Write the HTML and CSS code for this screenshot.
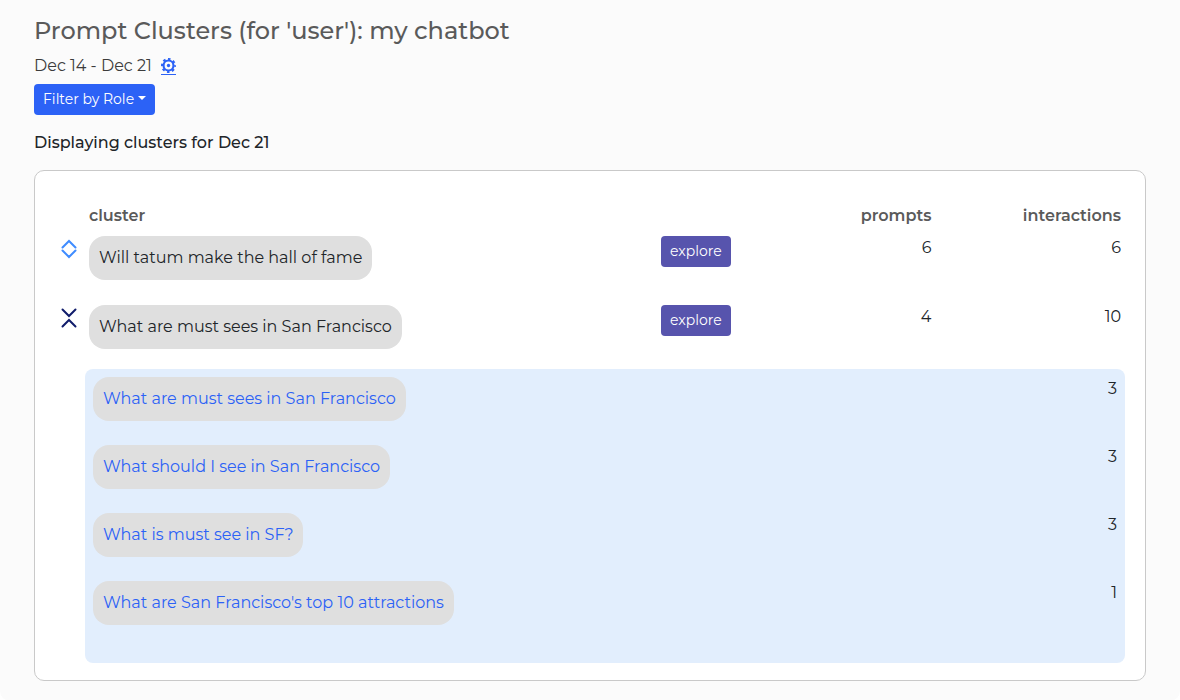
FILE: index.html
```html
<!DOCTYPE html>
<html lang="en">
<head>
<meta charset="utf-8">
<meta name="viewport" content="width=device-width, initial-scale=1">
<title>Prompt Clusters</title>
<link rel="stylesheet" href="styles.css">
</head>
<body>
<main class="page">
  <h1 class="title">Prompt Clusters (for 'user'): my chatbot</h1>
  <div class="range">
    <span>Dec 14 - Dec 21</span>
    <a class="settings" href="#settings" aria-label="Date settings">
      <svg class="gear" viewBox="0 0 16 16" aria-hidden="true">
        <circle cx="8" cy="8" r="5.3" fill="none" stroke="currentColor" stroke-width="2.3"/>
        <circle cx="8" cy="8" r="6.9" fill="none" stroke="currentColor" stroke-width="2.2" stroke-dasharray="2.7 2.719" stroke-dashoffset="1.35"/>
        <circle cx="8" cy="8" r="1.8" fill="currentColor"/>
      </svg>
    </a>
  </div>
  <button class="btn btn-primary" type="button">Filter by Role<span class="caret"></span></button>
  <h2 class="subtitle">Displaying clusters for Dec 21</h2>

  <section class="card">
    <table class="clusters">
      <colgroup>
        <col class="col-toggle"><col><col class="col-action"><col class="col-prompts"><col class="col-interactions">
      </colgroup>
      <thead>
        <tr><td></td><th scope="col">cluster</th><td></td><th class="num" scope="col">prompts</th><th class="num" scope="col">interactions</th></tr>
      </thead>
      <tbody>
        <tr class="cluster">
          <td><button class="toggle toggle-closed" type="button" aria-label="Expand cluster" aria-expanded="false"><svg class="chevrons" viewBox="0 0 16 20" aria-hidden="true"><path d="M1.500 8.500 8 2 14.500 8.500M1.500 11.500 8 18 14.500 11.500"/></svg></button></td>
          <td><div class="pill">Will tatum make the hall of fame</div></td>
          <td><button class="btn btn-explore" type="button">explore</button></td>
          <td class="num">6</td>
          <td class="num">6</td>
        </tr>
        <tr class="cluster">
          <td><button class="toggle toggle-open" type="button" aria-label="Collapse cluster" aria-expanded="true"><svg class="chevrons" viewBox="0 0 16 20" aria-hidden="true"><path d="M1.500 1.500 8 8 14.500 1.500M1.500 18.500 8 12 14.500 18.500"/></svg></button></td>
          <td><div class="pill">What are must sees in San Francisco</div></td>
          <td><button class="btn btn-explore" type="button">explore</button></td>
          <td class="num">4</td>
          <td class="num">10</td>
        </tr>
        <tr>
          <td></td>
          <td class="detail" colspan="4">
            <div class="panel">
              <table class="prompts">
                <tbody>
                  <tr><td><a class="pill" href="#p1">What are must sees in San Francisco</a></td><td class="num">3</td></tr>
                  <tr><td><a class="pill" href="#p2">What should I see in San Francisco</a></td><td class="num">3</td></tr>
                  <tr><td><a class="pill" href="#p3">What is must see in SF?</a></td><td class="num">3</td></tr>
                  <tr><td><a class="pill" href="#p4">What are San Francisco's top 10 attractions</a></td><td class="num">1</td></tr>
                </tbody>
              </table>
            </div>
          </td>
        </tr>
      </tbody>
    </table>
  </section>
</main>
</body>
</html>
```
FILE: styles.css
```css
* { box-sizing: border-box; }

body {
  margin: 0;
  background: #fff;
  color: #212529;
  font: 16px/24px Montserrat, Inter, "Open Sans", sans-serif;
}

.page {
  padding: 16px 34px 20px;
  background: #fbfbfb;
  border-radius: 0 0 10px 10px;
}

.title {
  margin: 0 0 8px;
  color: #5a5a5a;
  font-size: 24px;
  font-weight: 500;
  line-height: 30px;
}

.range {
  display: flex;
  align-items: center;
  gap: 9px;
  margin-bottom: 6px;
  color: #3c3c3c;
}

.settings {
  border-bottom: 1px solid #2c62f6;
  color: #2c62f6;
  line-height: 0;
}

.gear { width: 15px; height: 15px; margin-bottom: 1px; }

.btn {
  height: 31px;
  padding: 0 9px;
  border: 0;
  border-radius: 4px;
  color: #fff;
  font: inherit;
  font-size: 14px;
  line-height: 31px;
  white-space: nowrap;
}

.btn-primary { display: block; background: #2c62f6; }

.caret {
  display: inline-block;
  margin-left: 4px;
  vertical-align: 4px;
  border: 4px solid transparent;
  border-top-color: currentColor;
  border-bottom: 0;
}

.btn-explore { display: block; background: #5754ad; }

.subtitle {
  margin: 16px 0 15px;
  font-size: 16px;
  font-weight: 500;
  line-height: 24px;
}

.card {
  padding: 29px 20px 17px 19px;
  border: 1px solid #c9c9c9;
  border-radius: 10px;
  background: #fff;
}

.clusters,
.prompts {
  width: 100%;
  border-collapse: collapse;
}

.clusters { table-layout: fixed; }

.col-toggle { width: 31px; }
.col-action { width: 12%; }
.col-prompts { width: 14%; }
.col-interactions { width: 17.7%; }

td,
th {
  padding: 4px 4px 0;
  text-align: left;
  vertical-align: top;
}

th {
  padding-bottom: 4px;
  color: #5a5a5a;
  font-weight: 600;
}

.num { text-align: right; }

.cluster:first-child { height: 69px; }

.toggle {
  display: block;
  width: 22px;
  padding: 3px 3px 0;
  border: 0;
  background: none;
  line-height: 0;
}

.toggle-closed { color: #3f8cff; }
.toggle-open { color: #101c6b; }

.chevrons {
  width: 16px;
  height: 20px;
  fill: none;
  stroke: currentColor;
  stroke-width: 2;
  stroke-linecap: round;
}

.pill {
  display: block;
  width: fit-content;
  margin-bottom: 20px;
  padding: 10px;
  border-radius: 16px;
  background: #dfdfdf;
  text-decoration: none;
}

a.pill { color: #2c62f6; }

.clusters .detail { padding: 0; }

.panel {
  padding: 4px 4px 18px;
  border-radius: 8px;
  background: #e2eefd;
}
```
